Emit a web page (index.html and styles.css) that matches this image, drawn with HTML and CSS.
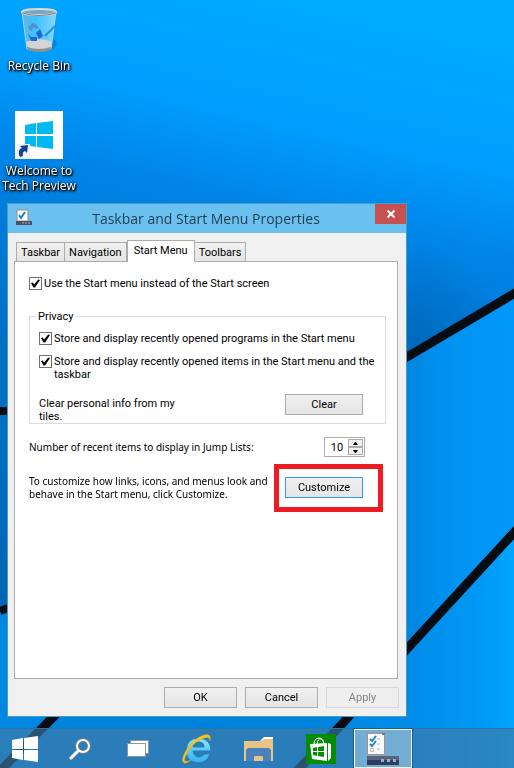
FILE: index.html
```html
<!DOCTYPE html>
<html lang="en">
<head>
    <meta charset="UTF-8">
    <meta name="viewport" content="width=device-width, initial-scale=1.0">
    <title>Taskbar and Start Menu Properties</title>
    <link rel="stylesheet" href="styles.css">
</head>
<body>

    <!-- Wallpaper -->
    <svg class="wallpaper" viewBox="0 0 514 768" preserveAspectRatio="none" aria-hidden="true">
        <defs>
            <linearGradient id="sky" gradientUnits="userSpaceOnUse" x1="300" y1="0" x2="210" y2="400">
                <stop offset="0" stop-color="#00abff"/>
                <stop offset="0.3" stop-color="#009dff"/>
                <stop offset="0.5" stop-color="#0085e8"/>
                <stop offset="0.75" stop-color="#0078d4"/>
                <stop offset="1" stop-color="#006fc0"/>
            </linearGradient>
            <radialGradient id="shade" gradientUnits="userSpaceOnUse" cx="400" cy="350" r="110">
                <stop offset="0" stop-color="#0068bb"/>
                <stop offset="1" stop-color="#0068bb" stop-opacity="0"/>
            </radialGradient>
            <linearGradient id="left" x1="0" y1="0" x2="0" y2="1">
                <stop offset="0" stop-color="#0070c0"/>
                <stop offset="1" stop-color="#0064b4"/>
            </linearGradient>
            <linearGradient id="pane" x1="0" y1="0" x2="1" y2="0">
                <stop offset="0.75" stop-color="#0080d8"/>
                <stop offset="0.88" stop-color="#0093f2"/>
                <stop offset="1" stop-color="#0098fa"/>
            </linearGradient>
            <linearGradient id="floor" x1="0" y1="0" x2="1" y2="0">
                <stop offset="0" stop-color="#0088e4"/>
                <stop offset="0.5" stop-color="#008be8"/>
                <stop offset="0.85" stop-color="#0099f5"/>
                <stop offset="1" stop-color="#00a5ff"/>
            </linearGradient>
        </defs>
        <rect width="514" height="460" fill="url(#sky)"/>
        <rect width="514" height="460" fill="url(#shade)"/>
        <path d="M0 411H325L406 361 514 294V768H0z" fill="url(#pane)"/>
        <path d="M0 411H200V560L0 611z" fill="url(#left)"/>
        <path d="M0 611L200 540 300 768H0z" fill="#0087e2"/>
        <path d="M514 534L406 653 296 768H514z" fill="url(#floor)"/>
        <path d="M55 716H352L302 768H5z" fill="#0083dc"/>
        <g stroke="#050d12" fill="none">
            <path d="M0 411H20" stroke-width="8"/>
            <path d="M0 611L20 604" stroke-width="8"/>
            <path d="M380 373L520 290" stroke-width="9"/>
            <path d="M520 526L406 650 344 722 294 774" stroke-width="9"/>
            <path d="M70 700L0 771" stroke-width="9"/>
        </g>
    </svg>

    <div class="desktop">
        <!-- Desktop icons -->
        <div class="icons">
            <a class="icon" href="#">
                <svg width="48" height="48" viewBox="0 0 48 48">
                    <defs>
                        <linearGradient id="glass">
                            <stop offset="0" stop-color="#5fb6e6"/>
                            <stop offset="0.4" stop-color="#3fc0ff"/>
                            <stop offset="1" stop-color="#86d5fa"/>
                        </linearGradient>
                    </defs>
                    <path d="M33 42l7-9 2 5-5 6z" fill="#0473bd" opacity="0.6"/>
                    <path d="M7 6h34l-5 37q-12 4-24 0z" fill="url(#glass)" stroke="#a7d6ed"/>
                    <path d="M11 36q13-6 26 0l-1 7q-11 3-23 0z" fill="#d3d5d6"/>
                    <path d="M12 41q12 4 24 0v3q-11 4-23 0z" fill="#8e8e8e"/>
                    <path d="M13 22l4-5 4 1 3 4-3 1-2-2-3 4z" fill="#4a93d8"/>
                    <path d="M21 27l4-4 3 7-4 3zM13 27l3 4 6 0v4h-6z" fill="#1f68cf"/>
                    <path d="M30 30l10-10" stroke="#1692e0" stroke-width="2"/>
                    <ellipse cx="24" cy="6" rx="17" ry="3" fill="#72a9c6" stroke="#ded9d6" stroke-width="2"/>
                    <path d="M7 7q17 5 34 0" fill="none" stroke="#82807f"/>
                </svg>
                <span>Recycle Bin</span>
            </a>
            <a class="icon" href="#">
                <svg width="48" height="48" viewBox="0 0 48 48">
                    <rect width="48" height="48" fill="#fff"/>
                    <path d="M10 14l11-2v11H10zM22 12l16-2v13H22zM10 25h11v11l-11-2zM22 25h16v13l-16-2z" fill="#00b9f2"/>
                    <rect x="2" y="33" width="13" height="15" fill="#eef3f8"/>
                    <path d="M4 44q-1-6 3-7l-2-2 8-1-1 8-2-2q-3 1-2 5l-3 1z" fill="#173f8f"/>
                </svg>
                <span>Welcome to Tech Preview</span>
            </a>
        </div>

        <!-- Properties window -->
        <form class="window" onsubmit="return false">
            <div class="title-bar">
                <svg width="17" height="17" viewBox="0 0 17 17">
                    <path d="M1 1h11v11H1z" fill="#fff" stroke="#928a8c"/>
                    <path d="M3 6l2 3 4-6" fill="none" stroke="#1683cf" stroke-width="2"/>
                    <path d="M0 12h16v4H0z" fill="#4a5063"/>
                    <path d="M6 14h2M9 14h2M12 14h2" stroke="#a7abb8"/>
                </svg>
                <h1>Taskbar and Start Menu Properties</h1>
                <button type="button" class="close-btn" aria-label="Close">
                    <svg width="8" height="8" viewBox="0 0 8 8"><path d="M0.500 0.500l7 7M7.500 0.500l-7 7" stroke="#fff" stroke-width="2"/></svg>
                </button>
            </div>

            <div class="tabs">
                <button type="button" class="tab">Taskbar</button>
                <button type="button" class="tab">Navigation</button>
                <button type="button" class="tab active">Start Menu</button>
                <button type="button" class="tab">Toolbars</button>
            </div>

            <div class="panel">
                <label class="check"><input type="checkbox" checked>Use the Start menu instead of the Start screen</label>

                <fieldset class="privacy">
                    <legend>Privacy</legend>
                    <label class="check"><input type="checkbox" checked>Store and display recently opened programs in the Start menu</label>
                    <label class="check"><input type="checkbox" checked>Store and display recently opened items in the Start menu and the taskbar</label>
                    <div class="row clear-row">
                        <p class="clear-text">Clear personal info from my tiles.</p>
                        <button type="button" class="btn wide">Clear</button>
                    </div>
                </fieldset>

                <div class="row recent-row">
                    <label for="recent" class="note">Number of recent items to display in Jump Lists:</label>
                    <div class="spinner">
                        <input id="recent" type="number" value="10" min="0" max="60">
                        <div class="arrows">
                            <button type="button" aria-label="More" onclick="recent.stepUp()"><svg width="5" height="3" viewBox="0 0 5 3"><path d="M0 3h5L3 0H2z"/></svg></button>
                            <button type="button" aria-label="Less" onclick="recent.stepDown()"><svg width="5" height="3" viewBox="0 0 5 3"><path d="M0 0h5L3 3H2z"/></svg></button>
                        </div>
                    </div>
                </div>

                <div class="row">
                    <p class="note">To customize how links, icons, and menus look and behave in the Start menu, click Customize.</p>
                    <div class="highlight">
                        <button type="button" class="btn wide focused">Customize</button>
                    </div>
                </div>
            </div>

            <div class="buttons">
                <button type="submit" class="btn">OK</button>
                <button type="button" class="btn">Cancel</button>
                <button type="button" class="btn" disabled>Apply</button>
            </div>
        </form>
    </div>

    <!-- Taskbar -->
    <nav class="taskbar">
        <button class="task start" aria-label="Start">
            <svg width="28" height="26" viewBox="0 0 28 26"><path d="M1 4l11-2v11H1zM13 2l14-2v13H13zM1 14h11v10L1 22zM13 14h14v12l-14-2z" fill="#fff"/></svg>
        </button>
        <button class="task" aria-label="Search">
            <svg width="22" height="22" viewBox="0 0 22 22" fill="none">
                <path d="M2 20l7-7" stroke="#6f7f8c" stroke-width="4" stroke-linecap="round"/>
                <circle cx="14" cy="8" r="6" stroke="#6f7f8c" stroke-width="4"/>
                <path d="M2 20l7-7" stroke="#fff" stroke-width="3" stroke-linecap="round"/>
                <circle cx="14" cy="8" r="6" stroke="#fff" stroke-width="2"/>
            </svg>
        </button>
        <button class="task view" aria-label="Task View">
            <svg width="22" height="18" viewBox="0 0 22 18" stroke="#8b97a0"><path d="M3.500 0.500h18v13h-18z" fill="#fff"/><path d="M0.500 3.500h18v13h-18z" fill="#fff"/></svg>
        </button>
        <button class="task app" aria-label="Internet Explorer">
            <svg width="30" height="32" viewBox="0 0 30 32">
                <defs>
                    <linearGradient id="ie" x1="0" y1="0" x2="0" y2="1">
                        <stop offset="0" stop-color="#9be6ff"/>
                        <stop offset="0.5" stop-color="#5cc9f5"/>
                        <stop offset="1" stop-color="#39aee8"/>
                    </linearGradient>
                </defs>
                <path d="M29 18H11q1 6 6 6 4 0 5-3h6q-3 9-12 9Q4 29 4 17 5 5 17 5q12 1 12 13zM11 14h11q0-5-5-5t-6 5z" fill="url(#ie)" stroke="#1b81bd" fill-rule="evenodd"/>
                <path d="M9 27Q3 32 1 29q-2-4 4-13Q12 5 22 2q8-2 6 6 0-5-6-3Q13 8 7 17 1 27 3 28q2 1 6-1z" fill="#f6c927" stroke="#d29a16" stroke-width="0.500"/>
            </svg>
        </button>
        <button class="task app" aria-label="File Explorer">
            <svg width="30" height="26" viewBox="0 0 30 26">
                <path d="M16 5l4-4h9v5z" fill="#fff"/>
                <path d="M0 5h17l3-2h9v22H0z" fill="#e9c585"/>
                <path d="M21 1h8v2h-9z" fill="#fff"/>
                <path d="M2 14l2-2h21l2 2v11H2z" fill="#4b82bb"/>
                <path d="M10 25v-4l1-1h7l1 1v4z" fill="#e9c585"/>
            </svg>
        </button>
        <button class="task app" aria-label="Store">
            <svg width="30" height="30" viewBox="0 0 30 30">
                <rect width="30" height="30" fill="#048c04"/>
                <path d="M8 11q0-7 5-7 4 0 5 6M11 10q1-6 4-5 3 1 3 5" fill="none" stroke="#fff"/>
                <path d="M4 10l17-1v18L6 25zM22 9l3 1v14l-3 3z" fill="#fff"/>
                <path d="M7 14l4-1v4H7zM12 13l6-1v5h-6zM7 18h4v4l-4-1zM12 18h6v5l-6-1z" fill="#048c04"/>
            </svg>
        </button>
        <button class="task app open" aria-label="Taskbar and Start Menu Properties">
            <svg width="32" height="32" viewBox="0 0 32 32">
                <path d="M0.500 0.500h17v21h-17z" fill="#fafafa" stroke="#a1918f"/>
                <path d="M15 0h3v2h-3z" fill="#99706e"/>
                <path d="M3 6l2 2 4-5M3 11l2 2 4-5" fill="none" stroke="#2382cb" stroke-width="2"/>
                <path d="M10 6h3M10 11h3M10 16h3" stroke="#b5b5b5"/>
                <path d="M3.500 15.500h3v3h-3z" fill="none" stroke="#b9b9b9"/>
                <rect y="23" width="32" height="9" fill="#2d3c63"/>
                <rect y="23" width="32" height="4" fill="#56657f"/>
                <path d="M14 26h3v3h-3zM20 26h3v3h-3zM26 26h3v3h-3z" fill="#a3abbb"/>
            </svg>
        </button>
    </nav>

</body>
</html>
```
FILE: styles.css
```css
* {
    box-sizing: border-box;
}

body {
    margin: 0;
    min-height: 100vh;
    display: flex;
    flex-direction: column;
    font-family: Roboto, "Open Sans", sans-serif;
    font-size: 11px;
    line-height: 13px;
    color: #000;
    background-color: #0088e2;
}

h1, p {
    margin: 0;
}

button, input {
    font: inherit;
    color: inherit;
}

button {
    padding: 0;
}

svg {
    display: block;
    flex: none;
}

.wallpaper {
    position: fixed;
    top: 0;
    left: 0;
    width: 100%;
    height: 100%;
    z-index: -1;
}

.desktop {
    flex: 1;
    display: flex;
    flex-direction: column;
    padding: 6px 7px 11px;
}

/* Desktop icons */
.icons {
    display: flex;
    flex-direction: column;
    gap: 38px;
    height: 197px;
    margin-left: -7px;
    width: 78px;
}

.icon {
    display: flex;
    flex-direction: column;
    align-items: center;
    gap: 4px;
    font-family: "Open Sans", "Noto Sans", sans-serif;
    font-size: 12px;
    line-height: 15px;
    text-align: center;
    color: #fff;
    text-decoration: none;
    text-shadow: 1px 1px 1px #000, 1px 1px 3px #000, 0 1px 3px #000;
}

/* Window */
.window {
    flex: 1;
    display: flex;
    flex-direction: column;
    width: 100%;
    max-width: 400px;
    background-color: #f0f0f0;
    border: 1px solid #4a9cc8;
}

.title-bar {
    display: flex;
    align-items: flex-start;
    height: 29px;
    padding-left: 8px;
    background-color: #6ac1f0;
}

.title-bar > svg {
    margin-top: 5px;
}

.title-bar h1 {
    flex: 1;
    padding-left: 4px;
    font-family: "Open Sans", "Noto Sans", sans-serif;
    font-size: 14px;
    font-weight: normal;
    line-height: 29px;
    text-align: center;
    color: #1f3d50;
}

.close-btn {
    display: flex;
    align-items: center;
    justify-content: center;
    width: 31px;
    height: 20px;
    border: none;
    background-color: #c75050;
}

.tabs {
    position: relative;
    display: flex;
    align-items: flex-end;
    padding: 7px 8px 0;
}

.tab {
    height: 19px;
    padding: 0 4px;
    border: 1px solid #acacac;
    border-bottom: none;
    background: linear-gradient(#f0f0f0, #e5e5e5);
}

.tab + .tab {
    border-left: none;
}

.tab.active {
    height: 22px;
    margin-bottom: -1px;
    padding: 0 6px 3px;
    border-left: 1px solid #acacac;
    background: #fff;
}

.panel {
    flex: 1;
    margin: 0 8px 0 6px;
    padding: 15px 11px 15px 14px;
    border: 1px solid #acacac;
    background-color: #fff;
}

.check {
    display: flex;
    align-items: flex-start;
    gap: 2px;
}

.check input {
    appearance: none;
    flex: none;
    width: 13px;
    height: 13px;
    margin: 0;
    border: 1px solid #707070;
    background-color: #fff;
}

.check input:checked::before {
    content: "";
    display: block;
    width: 9px;
    height: 9px;
    margin: 1px;
    background-color: #000;
    clip-path: polygon(0 45%, 20% 40%, 35% 62%, 80% 5%, 100% 10%, 45% 95%, 28% 95%);
}

.privacy {
    min-width: 0;
    margin: 20px 0 0;
    padding: 9px 9px 0;
    border: 1px solid #dcdcdc;
}

.privacy legend {
    margin-left: -3px;
    padding: 0 2px;
}

.privacy .check {
    margin-bottom: 10px;
}

.row {
    display: flex;
    align-items: center;
    justify-content: space-between;
}

.clear-row {
    align-items: flex-end;
    height: 32px;
    padding-right: 13px;
}

.clear-row .btn {
    margin-bottom: 8px;
}

.clear-text {
    width: 150px;
}

.recent-row {
    margin: 13px 0 7px;
    padding-right: 21px;
}

.note {
    font-family: "Noto Sans", "Open Sans", sans-serif;
    font-size: 10px;
}

.spinner {
    display: flex;
    width: 41px;
    height: 20px;
    padding: 1px;
    border: 1px solid #abadb3;
}

.spinner input {
    appearance: textfield;
    flex: 1;
    min-width: 0;
    padding: 0;
    border: none;
    text-align: center;
    outline: none;
}

.spinner input::-webkit-inner-spin-button {
    display: none;
}

.arrows {
    display: flex;
    flex-direction: column;
    width: 15px;
}

.arrows button {
    flex: 1;
    display: flex;
    align-items: center;
    justify-content: center;
    border: 1px solid #acacac;
    background-color: #efefef;
}

.highlight {
    flex: none;
    margin-right: 3px;
    padding: 8px 15px 9px 6px;
    border: 5px solid #ed1c24;
}

.btn {
    width: 73px;
    height: 21px;
    border: 1px solid #acacac;
    background: linear-gradient(#f0f0f0, #e5e5e5);
}

.btn.wide {
    display: block;
    width: 78px;
}

.btn.focused {
    border-color: #3399ff;
}

.btn:disabled {
    color: #838383;
    border-color: #d9d9d9;
    background: #efefef;
}

.buttons {
    display: flex;
    justify-content: flex-end;
    gap: 8px;
    padding: 8px 7px;
}

/* Taskbar */
.taskbar {
    display: flex;
    height: 40px;
    border-top: 1px solid #2b74a6;
    background-color: rgba(65, 122, 164, 0.65);
}

.task {
    display: flex;
    align-items: center;
    justify-content: center;
    width: 60px;
    border: none;
    background: none;
}

.task.start {
    width: 50px;
}

.task.view {
    width: 56px;
}

.task.app {
    width: 62px;
}

.task.open {
    width: 58px;
    margin: 0 2px;
    border: 1px solid #f3f8fb;
    outline: 1px solid #1d5f8c;
    background-color: rgba(190, 220, 235, 0.5);
}
```
